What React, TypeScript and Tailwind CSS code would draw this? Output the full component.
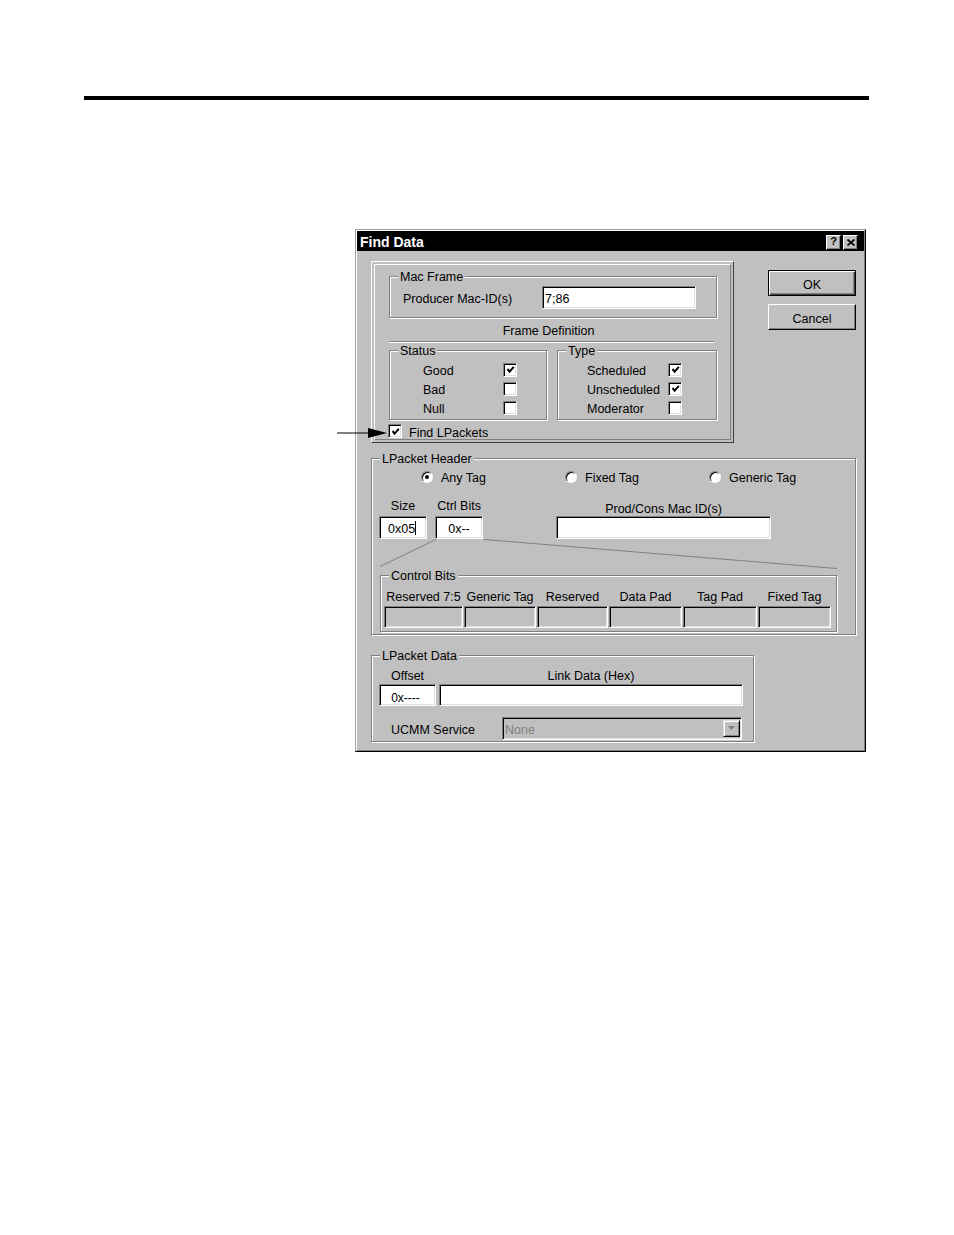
import React from "react";

const sunkenWhite =
  "bg-white border border-t-[#808080] border-l-[#808080] border-b-white border-r-white shadow-[inset_1px_1px_0_#000,inset_-1px_-1px_0_#dfdfdf]";
const sunkenGray =
  "bg-[#c0c0c0] border border-t-[#808080] border-l-[#808080] border-b-white border-r-white shadow-[inset_1px_1px_0_#000,inset_-1px_-1px_0_#dfdfdf]";
const TX = "leading-[15px] pt-[2px] whitespace-nowrap";
const TS = TX + " -mb-[2px]";

function Group({
  label,
  className,
  children,
}: {
  label: string;
  className: string;
  children?: React.ReactNode;
}) {
  return (
    <div
      className={
        "relative border border-[#808080] shadow-[inset_1px_1px_0_#fff,1px_1px_0_#fff] " +
        className
      }
    >
      <span className="absolute -top-[7px] left-[8px] bg-[#c0c0c0] px-[2px] leading-[15px] whitespace-nowrap">
        {label}
      </span>
      {children}
    </div>
  );
}

function Check({ checked }: { checked?: boolean }) {
  return (
    <span className={"w-[14px] h-[14px] shrink-0 flex items-center justify-center " + sunkenWhite}>
      {checked ? (
        <svg width="9" height="9" viewBox="0 0 9 9">
          <polyline points="1.5,4 3.6,6.6 7.8,1.8" fill="none" stroke="#000" strokeWidth="2" />
        </svg>
      ) : null}
    </span>
  );
}

function Radio({ on }: { on?: boolean }) {
  return (
    <span className="w-[12px] h-[12px] shrink-0 rounded-full bg-white border border-t-[#808080] border-l-[#808080] border-b-white border-r-white shadow-[inset_1px_1px_0_#000] flex items-center justify-center">
      {on ? <span className="w-[4px] h-[4px] rounded-full bg-black" /> : null}
    </span>
  );
}

function CheckRow({ label, checked, labelW }: { label: string; checked?: boolean; labelW: string }) {
  return (
    <div className="flex items-center h-[19px]">
      <span className={labelW + " " + TS}>{label}</span>
      <Check checked={checked} />
    </div>
  );
}

const bitCols: { label: string; w: string }[] = [
  { label: "Reserved 7:5", w: "w-[79px]" },
  { label: "Generic Tag", w: "w-[72px]" },
  { label: "Reserved", w: "w-[71px]" },
  { label: "Data Pad", w: "w-[73px]" },
  { label: "Tag Pad", w: "w-[74px]" },
  { label: "Fixed Tag", w: "w-[73px]" },
];

export default function App() {
  return (
    <div className="relative w-[954px] h-[1235px] bg-white overflow-hidden font-['Liberation_Sans',Arial,sans-serif] text-[12.5px] text-black">
      <div className="pl-[84px] pt-[96px]">
        <div className="w-[785px] h-[4px] bg-black" />
      </div>

      <div className="ml-[355px] mt-[129px]">
        <div className="w-[511px] h-[523px] bg-[#c0c0c0] border border-t-[#a0a0a0] border-l-[#a0a0a0] border-r-black border-b-black">
          <div className="h-full border border-t-white border-l-white border-r-[#808080] border-b-[#808080] flex flex-col">
            {/* Title bar */}
            <div className="h-[20px] bg-black flex items-center pl-[3px] pr-[6px] pt-[2px]">
              <span className="text-white font-bold text-[14px] leading-[16px]">Find Data</span>
              <div className="ml-auto flex gap-[2px]">
                <div className="w-[15px] h-[15px] bg-[#c0c0c0] border border-t-white border-l-white border-r-black border-b-black shadow-[inset_-1px_-1px_0_#808080] flex items-center justify-center text-[11px] font-bold leading-none pb-[1px]">
                  ?
                </div>
                <div className="w-[15px] h-[15px] bg-[#c0c0c0] border border-t-white border-l-white border-r-black border-b-black shadow-[inset_-1px_-1px_0_#808080] flex items-center justify-center">
                  <svg width="8" height="7" viewBox="0 0 8 7">
                    <line x1="0.5" y1="0.5" x2="7.5" y2="6.5" stroke="#000" strokeWidth="1.7" />
                    <line x1="7.5" y1="0.5" x2="0.5" y2="6.5" stroke="#000" strokeWidth="1.7" />
                  </svg>
                </div>
              </div>
            </div>

            {/* Body */}
            <div className="pl-[14px] pt-[10px] flex flex-col">
              <div className="flex">
                {/* Mac Frame panel */}
                <div className="w-[363px] h-[182px] border border-t-white border-l-white border-r-[#404040] border-b-[#404040] p-[2px]">
                  <div className="h-full border border-t-white border-l-white border-r-[#808080] border-b-[#808080] pl-[14px] pt-[11px] flex flex-col">
                    <Group label="Mac Frame" className="w-[328px] h-[42px] pl-[13px] pt-[9px]">
                      <div className="flex items-center">
                        <span className={"w-[139px] " + TS}>Producer Mac-ID(s)</span>
                        <div className={"w-[154px] h-[23px] flex items-center pl-[2px] " + sunkenWhite}>
                          <span className={TS}>7;86</span>
                        </div>
                      </div>
                    </Group>
                    <div className={"w-[328px] mt-[4px] pr-[9px] text-center " + TS}>Frame Definition</div>
                    <div className="w-[325px] mt-[4px] border-t border-b border-t-[#808080] border-b-white" />
                    <div className="mt-[7px] flex gap-[10px]">
                      <Group label="Status" className="w-[158px] h-[70px] pt-[9px] pl-[33px]">
                        <CheckRow label="Good" checked labelW="w-[80px]" />
                        <CheckRow label="Bad" labelW="w-[80px]" />
                        <CheckRow label="Null" labelW="w-[80px]" />
                      </Group>
                      <Group label="Type" className="w-[160px] h-[70px] pt-[9px] pl-[29px]">
                        <CheckRow label="Scheduled" checked labelW="w-[81px]" />
                        <CheckRow label="Unscheduled" checked labelW="w-[81px]" />
                        <CheckRow label="Moderator" labelW="w-[81px]" />
                      </Group>
                    </div>
                    <div className="mt-[4px] -ml-[1px] flex items-center h-[14px]">
                      <Check checked />
                      <span className={"ml-[7px] " + TS}>Find LPackets</span>
                    </div>
                  </div>
                </div>

                {/* Buttons */}
                <div className="ml-[34px] pt-[9px] flex flex-col gap-[8px]">
                  <div className="w-[88px] h-[26px] border border-black shadow-[inset_1px_1px_0_#fff,inset_-1px_-1px_0_#404040,inset_-2px_-2px_0_#808080] flex items-center justify-center">
                    <span className={TS}>OK</span>
                  </div>
                  <div className="w-[88px] h-[26px] border border-t-white border-l-white border-r-black border-b-black shadow-[inset_-1px_-1px_0_#808080] flex items-center justify-center">
                    <span className={TS}>Cancel</span>
                  </div>
                </div>
              </div>

              {/* LPacket Header */}
              <Group label="LPacket Header" className="mt-[15px] w-[485px] h-[177px] flex flex-col">
                <svg
                  className="absolute left-0 top-0 pointer-events-none"
                  width="485"
                  height="177"
                  viewBox="0 0 485 177"
                >
                  <line x1="64" y1="80.5" x2="8" y2="107.5" stroke="#808080" strokeWidth="1" />
                  <line x1="112" y1="80.5" x2="465" y2="109.5" stroke="#808080" strokeWidth="1" />
                </svg>
                <div className="mt-[10px] h-[15px] pl-[49px] flex items-center">
                  <div className="w-[144px] flex items-center gap-[8px]">
                    <Radio on />
                    <span className={TS}>Any Tag</span>
                  </div>
                  <div className="w-[144px] flex items-center gap-[8px]">
                    <Radio />
                    <span className={TS}>Fixed Tag</span>
                  </div>
                  <div className="flex items-center gap-[8px]">
                    <Radio />
                    <span className={TS}>Generic Tag</span>
                  </div>
                </div>
                <div className="relative mt-[13px] h-[42px] pl-[7px] flex items-end">
                  <div className="w-[48px] flex flex-col">
                    <span className={"text-center mb-[2px] " + TX}>Size</span>
                    <div className={"h-[23px] flex items-center pl-[8px] " + sunkenWhite}>
                      <span className={TS}>0x05</span>
                      <span className="inline-block w-[1px] h-[14px] bg-black" />
                    </div>
                  </div>
                  <div className="ml-[8px] w-[48px] flex flex-col">
                    <span className={"text-center mb-[2px] " + TX}>Ctrl Bits</span>
                    <div className={"h-[23px] flex items-center justify-center " + sunkenWhite}>
                      <span className={TS}>0x--</span>
                    </div>
                  </div>
                  <div className="ml-[73px] w-[215px] flex flex-col">
                    <span className={"text-center -mb-[1px] " + TX}>Prod/Cons Mac ID(s)</span>
                    <div className={"h-[23px] " + sunkenWhite} />
                  </div>
                </div>
                <Group label="Control Bits" className="mt-[36px] ml-[8px] w-[457px] h-[57px] pt-[12px] pl-[3px] flex gap-[1px]">
                  {bitCols.map((c) => (
                    <div key={c.label} className={c.w + " flex flex-col"}>
                      <span className={"text-center mb-[1px] " + TX}>{c.label}</span>
                      <div className={"h-[22px] " + sunkenGray} />
                    </div>
                  ))}
                </Group>
              </Group>

              {/* LPacket Data */}
              <Group label="LPacket Data" className="mt-[20px] w-[383px] h-[87px] flex flex-col">
                <div className="mt-[11px] h-[39px] pl-[7px] flex items-end">
                  <div className="w-[57px] flex flex-col">
                    <span className={"text-center " + TX}>Offset</span>
                    <div className={"h-[22px] flex items-end justify-center pr-[4px] " + sunkenWhite}>
                      <span className="leading-[13px] text-[12px]">0x----</span>
                    </div>
                  </div>
                  <div className="ml-[3px] w-[304px] flex flex-col">
                    <span className={"text-center " + TX}>Link Data (Hex)</span>
                    <div className={"h-[22px] " + sunkenWhite} />
                  </div>
                </div>
                <div className="mt-[11px] h-[23px] pl-[19px] flex items-center">
                  <span className={"w-[111px] " + TS}>UCMM Service</span>
                  <div className={"w-[240px] h-[23px] flex items-center pl-[2px] pr-[1px] " + sunkenGray}>
                    <span className={"text-[#808080] " + TS}>None</span>
                    <div className="ml-auto w-[17px] h-[17px] bg-[#c0c0c0] border border-t-[#dfdfdf] border-l-[#dfdfdf] border-r-black border-b-black shadow-[inset_1px_1px_0_#fff,inset_-1px_-1px_0_#808080] flex items-center justify-center">
                      <svg width="7" height="5" viewBox="0 0 7 5">
                        <polygon points="0,0 7,0 3.5,4" fill="#808080" />
                      </svg>
                    </div>
                  </div>
                </div>
              </Group>
            </div>
          </div>
        </div>
      </div>

      {/* Callout arrow */}
      <svg className="absolute left-[336px] top-[426px]" width="52" height="14" viewBox="0 0 52 14">
        <line x1="1" y1="7" x2="36" y2="7" stroke="#000" strokeWidth="1" />
        <polygon points="32,2 51,7 32,12" fill="#000" />
      </svg>
    </div>
  );
}
